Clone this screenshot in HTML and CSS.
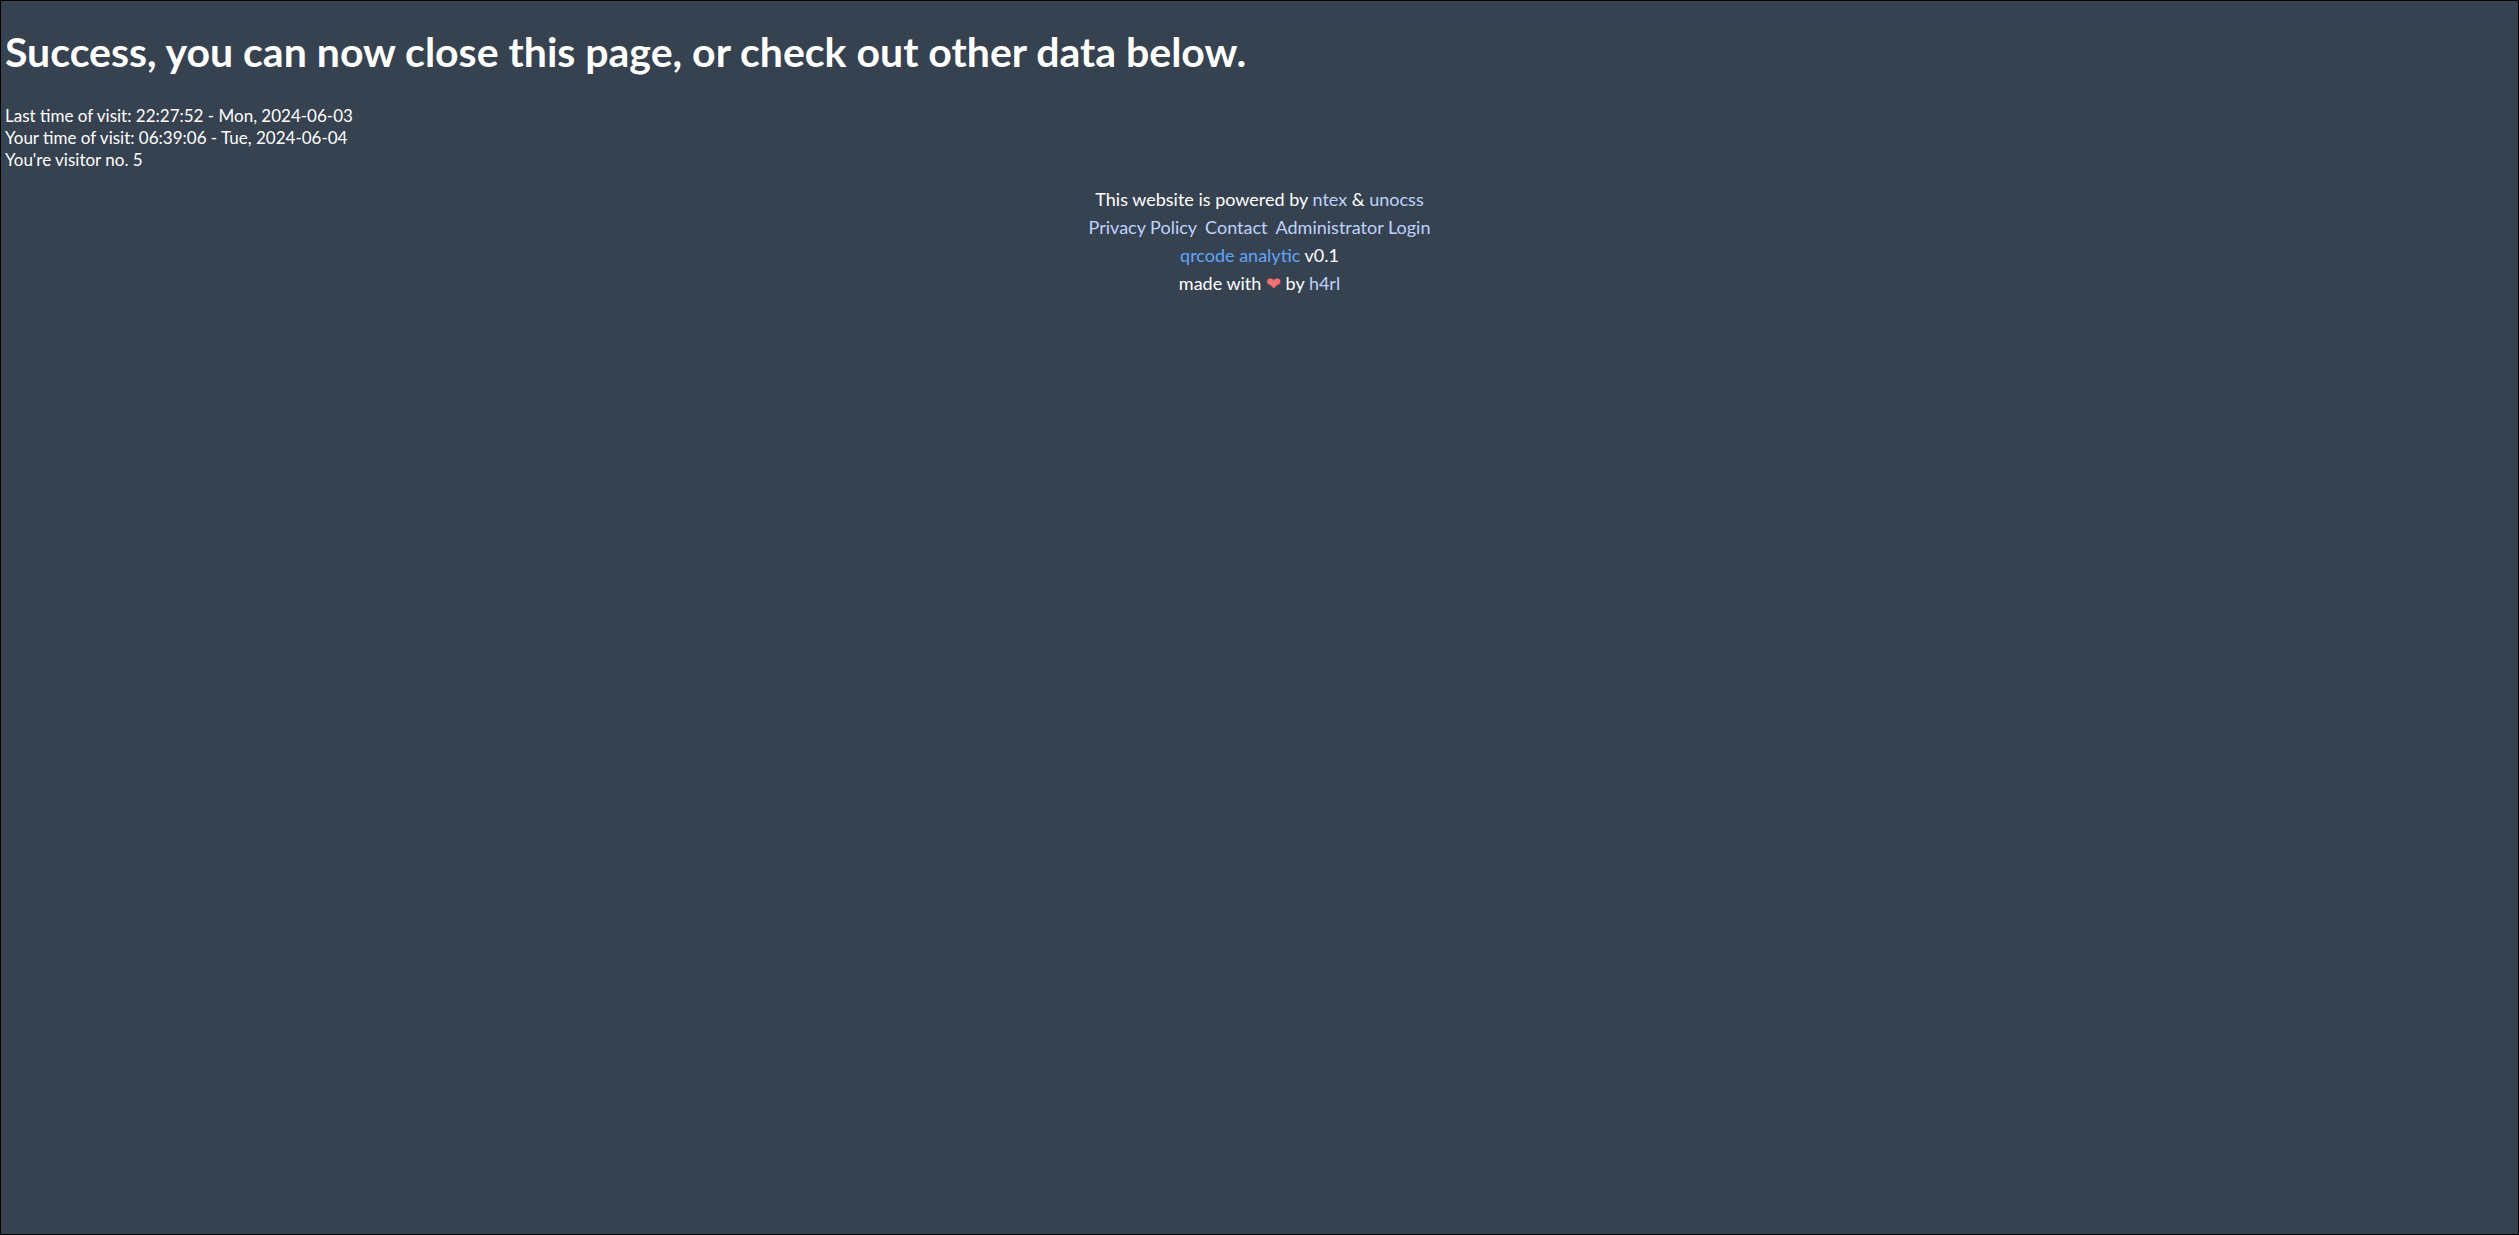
FILE: index.html
```html
<!DOCTYPE html>
<html lang="en">
<head>
<meta charset="utf-8">
<title>qrcode analytic</title>
<link rel="stylesheet" href="styles.css">
</head>
<body>
<main class="visit">
<h1 class="title">Success, you can now close this page, or check out other data below.</h1>
<p class="line">Last time of visit: 22:27:52 - Mon, 2024-06-03</p>
<p class="line">Your time of visit: 06:39:06 - Tue, 2024-06-04</p>
<p class="line">You're visitor no. 5</p>
</main>
<footer class="footer">
<div>This website is powered by <a class="link" href="#">ntex</a> &amp; <a class="link" href="#">unocss</a></div>
<nav class="nav"><a class="link" href="#">Privacy Policy</a><a class="link" href="#">Contact</a><a class="link" href="#">Administrator Login</a></nav>
<div><a class="brand" href="#">qrcode analytic</a> v0.1</div>
<div>made with <span class="heart">❤</span> by <a class="link" href="#">h4rl</a></div>
</footer>
</body>
</html>
```
FILE: styles.css
```css
* { box-sizing: border-box; margin: 0; }
body {
  min-height: 100vh;
  padding: 4px;
  border: 1px solid #000;
  background: #374251;
  color: #fff;
  font-family: Lato, sans-serif;
}
.title { padding: 19px 0 25px; font-size: 41px; line-height: 56px; }
.line { font-size: 17px; line-height: 22px; }
.footer { margin-top: 14px; text-align: center; font-size: 18px; line-height: 28px; }
.nav { display: flex; justify-content: center; gap: 8px; }
.link { color: #bfd3fe; text-decoration: none; }
.brand { color: #60a5fa; text-decoration: none; }
.heart { color: #f87171; }
```
